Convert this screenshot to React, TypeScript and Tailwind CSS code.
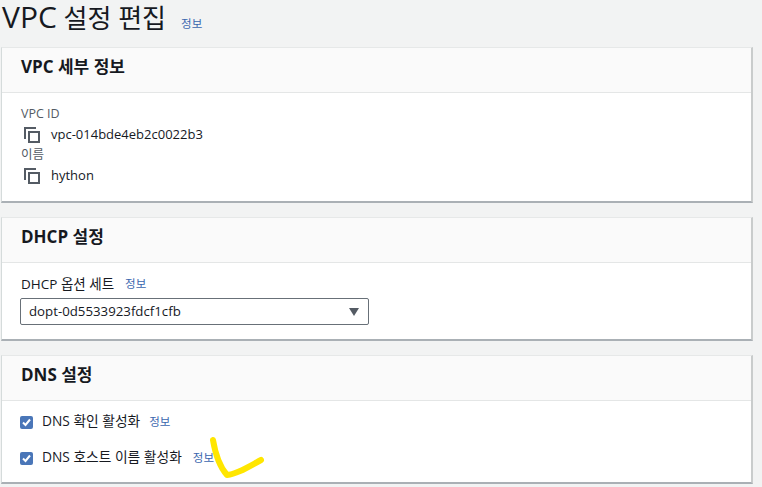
const fontStack = "font-['Open_Sans','Noto_Sans_CJK_KR',sans-serif]";

const InfoLink = ({ className = "" }: { className?: string }) => (
  <a className={`text-[11.5px] leading-4 text-[#3a66ae] ${className}`}>정보</a>
);

const CopyIcon = () => (
  <svg width="16" height="16" viewBox="0 0 16 16" fill="none" stroke="#545b64" strokeWidth="2" className="shrink-0">
    <path d="M1 12V1h11" />
    <rect x="5" y="5" width="10" height="10" />
  </svg>
);

const CheckBox = () => (
  <span className="flex h-[13px] w-[13px] shrink-0 items-center justify-center rounded-[2px] bg-[#4a76b8]">
    <svg width="13" height="13" viewBox="0 0 13 13" fill="none" stroke="#fff" strokeWidth="2">
      <path d="M3 6.5l2.5 2.5L10 3.5" />
    </svg>
  </span>
);

const Card = ({ title, className, children }: { title: string; className: string; children: React.ReactNode }) => (
  <section className="border-t border-l border-r-2 border-b-2 border-t-[#e6e8e8] border-l-[#d5dbdb] border-r-[#c9cccc] border-b-[#aab0b5] bg-white">
    <div className="flex h-[45px] items-center border-b border-[#e4e6e6] bg-[#fafafa] px-[19px] pb-[6px]">
      <h2 className="text-[17px] font-bold text-[#16191f]">{title}</h2>
    </div>
    <div className={className}>{children}</div>
  </section>
);

const CopyRow = ({ value, className = "" }: { value: string; className?: string }) => (
  <div className={`flex h-[24px] items-center gap-[11px] pl-[3px] text-[13px] text-[#16191f] ${className}`}>
    <CopyIcon />
    <span>{value}</span>
  </div>
);

export default function App() {
  return (
    <div className={`h-[487px] w-[762px] overflow-hidden bg-[#f2f3f3] ${fontStack}`}>
      <div className="flex h-[47px] items-start gap-[15px] pl-[2px]">
        <h1 className="text-[26px] leading-[34px] text-[#16191f]">
          <span className="text-[30px]">VPC</span> 설정 편집
        </h1>
        <InfoLink className="mt-[16px]" />
      </div>
      <div className="flex w-[753px] flex-col gap-[14px] pl-px">
        <Card title="VPC 세부 정보" className="h-[108px] px-[19px] pt-[12px]">
          <div className="text-[12.5px] leading-[18px] text-[#545b64]">VPC ID</div>
          <CopyRow value="vpc-014bde4eb2c0022b3" />
          <div className="text-[12.5px] leading-[16px] text-[#545b64]">이름</div>
          <CopyRow value="hython" className="mt-px" />
        </Card>
        <Card title="DHCP 설정" className="h-[76px] px-[18px] pt-[11px]">
          <div className="flex h-[20px] items-center gap-[11px] pl-px text-[13.5px] text-[#16191f]">
            DHCP 옵션 세트 <InfoLink />
          </div>
          <div className="mt-[4px] flex h-[27px] w-[349px] items-center justify-between rounded-[2px] border border-[#687078] pl-[8px] pr-[9px] text-[13.25px] text-[#16191f]">
            <span>dopt-0d5533923fdcf1cfb</span>
            <svg width="10" height="8" viewBox="0 0 10 8" fill="#545b64">
              <path d="M0 0h10L5 8z" />
            </svg>
          </div>
        </Card>
        <Card title="DNS 설정" className="relative flex h-[81px] flex-col gap-[16px] px-[18px] pt-[11px]">
          <label className="flex h-[20px] items-center gap-[9px] text-[13.75px] text-[#16191f]">
            <CheckBox />
            <span className="pb-[2px]">DNS 확인 활성화</span>
            <InfoLink />
          </label>
          <label className="flex h-[20px] items-center gap-[9px] text-[13.75px] text-[#16191f]">
            <CheckBox />
            <span className="pb-[2px]">DNS 호스트 이름 활성화</span>
            <InfoLink className="ml-[2px]" />
          </label>
          <svg width="60" height="50" viewBox="0 0 60 50" fill="none" stroke="#ffe600" strokeWidth="6" strokeLinecap="round" strokeLinejoin="round" className="absolute left-[205px] top-[29px]">
            <path d="M6 10C8 22 12 36 20 45C30 44 41 37 54 30" />
          </svg>
        </Card>
      </div>
    </div>
  );
}
